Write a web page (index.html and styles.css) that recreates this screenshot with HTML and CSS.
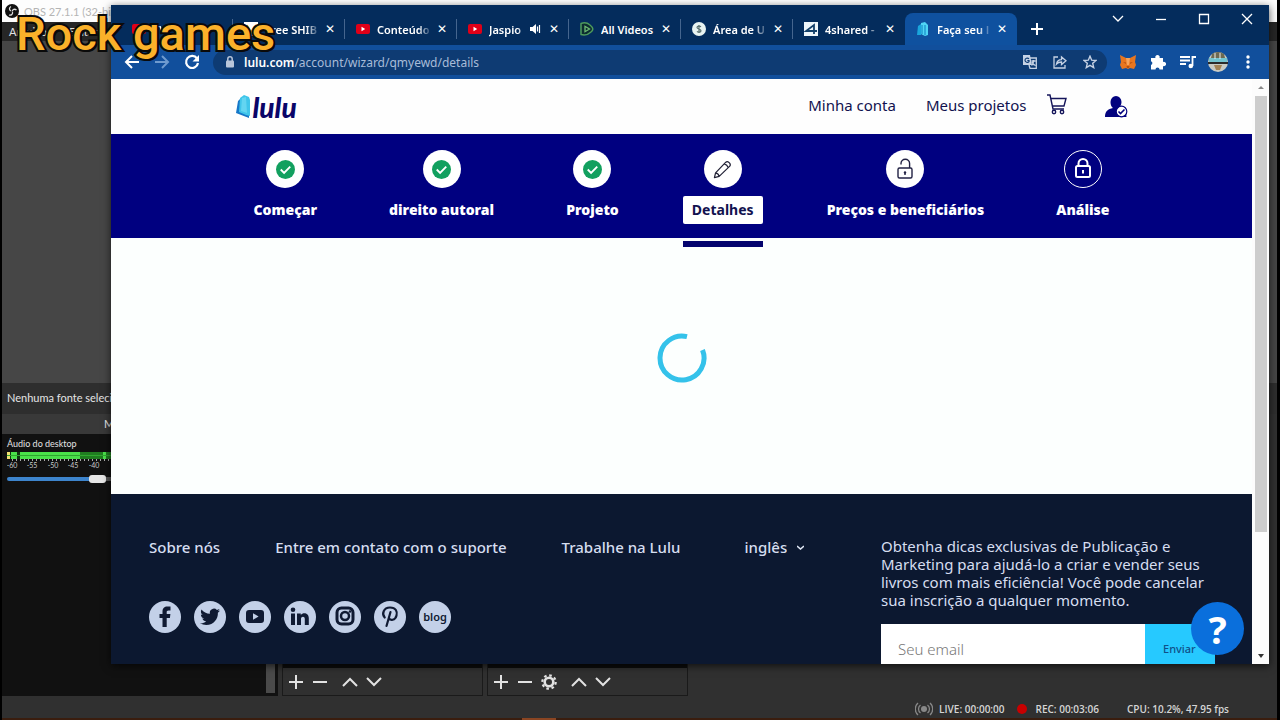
FILE: index.html
```html
<!DOCTYPE html>
<html lang="pt-BR">
<head>
<meta charset="utf-8">
<title>Rock games</title>
<link rel="stylesheet" href="styles.css">
</head>
<body>
<div class="desktop">
  <section class="obs" aria-label="OBS">
    <header class="obs-title">
      <svg width="14" height="14" viewBox="0 0 14 14"><circle cx="7" cy="7" r="7" fill="#111"/><g fill="none" stroke="#ddd" stroke-width="1.3"><path d="M6 2.5c-2 1-2 3.600 0 4.500"/><path d="M11.500 6c-2-1.500-4-.6-4.300 1.500"/><path d="M4 11c2 .6 4-.6 3.500-3"/></g></svg>
      <span>OBS 27.1.1 (32-bit</span>
    </header>
    <nav class="obs-menu"><span>Arquivo</span><span>Editar</span></nav>
    <div class="obs-preview"></div>
    <div class="obs-source">Nenhuma fonte selecionada</div>
    <div class="docks">
      <section class="mixer">
        <h2 class="mixer-title">Mixer de áudio</h2>
        <div class="mixer-body">
          <label class="mixer-label" for="vol">Áudio do desktop</label>
          <svg class="meter" width="260" height="20" viewBox="0 0 260 20">
            <path fill="#207d20" d="M0 1h260v7H0z"/><path fill="#4ae04a" d="M4 1h69v7H4zM96 1h3v7h-3z"/>
            <path fill="#f0e070" d="M0 1h3v7H0z"/><path fill="#10350f" d="M10 1h3v7h-3zM3 1h1v7H3z"/>
            <path stroke="#2fa82f" d="M0 4.500h260"/>
            <path stroke="#aaa" stroke-dasharray="1 3" d="M5 9h255" stroke-width="2"/>
            <g class="scale"><text x="5" y="17">-60</text><text x="25" y="17">-55</text><text x="46" y="17">-50</text><text x="66" y="17">-45</text><text x="87" y="17">-40</text></g>
          </svg>
          <input class="volume" id="vol" type="range" min="0" max="100" value="34">
        </div>
      </section>
      <div class="dock dock-a">
        <div class="dock-tools">
          <button aria-label="Adicionar cena"><svg width="16" height="16"><path d="M8 1v14M1 8h14"/></svg></button>
          <button aria-label="Remover cena"><svg width="16" height="16"><path d="M1 8h14"/></svg></button>
          <button class="spaced" aria-label="Mover cena para cima"><svg width="16" height="16"><path d="M1 12l7-7 7 7"/></svg></button>
          <button aria-label="Mover cena para baixo"><svg width="16" height="16"><path d="M1 4l7 7 7-7"/></svg></button>
        </div>
      </div>
      <div class="dock dock-b">
        <div class="dock-tools">
          <button aria-label="Adicionar fonte"><svg width="16" height="16"><path d="M8 1v14M1 8h14"/></svg></button>
          <button aria-label="Remover fonte"><svg width="16" height="16"><path d="M1 8h14"/></svg></button>
          <button aria-label="Propriedades"><svg width="16" height="16"><circle cx="8" cy="8" r="4.300" stroke-width="2.600"/><circle cx="8" cy="8" r="6.700" stroke-width="2.200" stroke-dasharray="2.600 2.660"/></svg></button>
          <button class="spaced" aria-label="Mover fonte para cima"><svg width="16" height="16"><path d="M1 12l7-7 7 7"/></svg></button>
          <button aria-label="Mover fonte para baixo"><svg width="16" height="16"><path d="M1 4l7 7 7-7"/></svg></button>
        </div>
      </div>
    </div>
    <footer class="obs-status">
      <span class="stat"><svg width="18" height="14" viewBox="0 0 18 14"><circle cx="9" cy="7" r="3" fill="#888"/><path fill="none" stroke="#888" stroke-width="1.300" d="M5.500 3a5 5 0 0 0 0 8M12.500 3a5 5 0 0 1 0 8M3 1a8 8 0 0 0 0 12M15 1a8 8 0 0 1 0 12"/></svg>LIVE: 00:00:00</span>
      <span class="stat rec"><i class="rec-dot"></i>REC: 00:03:06</span>
      <span class="stat cpu">CPU: 10.2%, 47.95 fps</span>
    </footer>
    <div class="taskbar"><i class="task"></i></div>
  </section>

  <section class="browser" aria-label="Navegador">
    <header class="tabstrip">
      <div class="tabs">
        <div class="tab"><svg class="fav" viewBox="0 0 14 14"><rect y="2" width="14" height="10" rx="2" fill="#e00018"/><path fill="#fff" d="M5.500 4.800v4.400L9.200 7z"/></svg><span class="tab-name">TV</span></div>
        <div class="tab"><svg class="fav" viewBox="0 0 14 14"><path fill="#fff" d="M0 0h14v14H0z"/><path fill="none" stroke="#e8a020" stroke-width="1.500" d="M3 3l4 7 5-7"/></svg><span class="tab-name">Free SHIB</span><button class="x" aria-label="Fechar">✕</button></div>
        <div class="tab"><svg class="fav" viewBox="0 0 14 14"><rect y="2" width="14" height="10" rx="2" fill="#e00018"/><path fill="#fff" d="M5.500 4.800v4.400L9.200 7z"/></svg><span class="tab-name">Conteúdo</span><button class="x" aria-label="Fechar">✕</button></div>
        <div class="tab"><svg class="fav" viewBox="0 0 14 14"><rect y="2" width="14" height="10" rx="2" fill="#e00018"/><path fill="#fff" d="M5.500 4.800v4.400L9.200 7z"/></svg><span class="tab-name">Jaspio</span><svg class="sound" width="11" height="10" viewBox="0 0 11 10"><path fill="#fff" d="M0 3h2.500L6 0v10L2.500 7H0z"/><path fill="none" stroke="#fff" stroke-width="1.200" d="M7.500 2.500v5M9.500 1v8"/></svg><button class="x" aria-label="Fechar">✕</button></div>
        <div class="tab"><svg class="fav" viewBox="0 0 14 14"><path fill="#0c2c30" stroke="#4d9a5c" stroke-width="1.500" stroke-linejoin="round" d="M1 1.500Q6-.5 10 3q5 4 1 7-4 4-10 2.500z"/><path fill="none" stroke="#6fbd74" stroke-width="1.300" d="M5 4.300v5.400L9.500 7z"/></svg><span class="tab-name whole">All Videos</span><button class="x" aria-label="Fechar">✕</button></div>
        <div class="tab"><svg class="fav" viewBox="0 0 14 14"><circle cx="7" cy="7" r="7" fill="#e8f3f2"/><path fill="none" stroke="#5a7170" stroke-width="1.200" d="M9 4.800C7.500 3.500 5 4 5 5.500S9 7 9 8.700 6 10.500 5 9.300M7 3v8"/></svg><span class="tab-name">Área de U</span><button class="x" aria-label="Fechar">✕</button></div>
        <div class="tab last"><svg class="fav" viewBox="0 0 14 14"><path fill="#eef6fb" d="M0 0h14v14H0z"/><path fill="none" stroke="#14416b" stroke-width="1.800" d="M10 12V3L2 9h11"/></svg><span class="tab-name">4shared -</span><button class="x" aria-label="Fechar">✕</button></div>
        <div class="tab active"><svg class="fav" viewBox="0 0 14 14"><path fill="#1aa6dc" d="M2 4l3-2v11l-4 0z"/><path fill="#4fd4f5" d="M5 1l4-1 3 3v10l-3 1-4-2z"/><path stroke="#0b7fc0" d="M6 3v9M9 3v10"/></svg><span class="tab-name">Faça seu l</span><button class="x" aria-label="Fechar">✕</button></div>
        <button class="newtab" aria-label="Nova guia"><svg width="12" height="12"><path stroke="#fff" stroke-width="2" d="M6 0v12M0 6h12"/></svg></button>
      </div>
      <div class="win-controls">
        <button aria-label="Pesquisar guias"><svg width="12" height="12"><path d="M1 3l5 5 5-5"/></svg></button>
        <button aria-label="Minimizar"><svg width="12" height="12"><path d="M1 6.500h10"/></svg></button>
        <button aria-label="Maximizar"><svg width="12" height="12"><path d="M1.500 1.500h9v9h-9z"/></svg></button>
        <button aria-label="Fechar janela"><svg width="12" height="12"><path d="M1 1l10 10M11 1L1 11"/></svg></button>
      </div>
    </header>
    <div class="toolbar">
      <button class="tool" aria-label="Voltar"><svg width="16" height="16" viewBox="0 0 16 16"><path fill="none" stroke="#fff" stroke-width="2" d="M15 8H2M8 2L2 8l6 6"/></svg></button>
      <button class="tool" aria-label="Avançar"><svg width="16" height="16" viewBox="0 0 16 16"><path fill="none" stroke="#6f9bcf" stroke-width="2" d="M1 8h13M8 2l6 6-6 6"/></svg></button>
      <button class="tool" aria-label="Recarregar"><svg width="16" height="16" viewBox="0 0 16 16"><path fill="none" stroke="#fff" stroke-width="2.200" d="M13 4.500A6 6 0 1 0 14 9"/><path fill="#fff" d="M15 1v6.500H8.500z"/></svg></button>
      <div class="omnibox">
        <svg width="10" height="12" viewBox="0 0 10 12"><rect x="1" y="4.500" width="8" height="7" rx="1" fill="#b9c6da"/><path fill="none" stroke="#b9c6da" stroke-width="1.500" d="M2.800 5V3a2.200 2.200 0 0 1 4.400 0v2"/></svg>
        <p class="url"><b>lulu.com</b>/account/wizard/qmyewd/details</p>
        <button class="tool dim" aria-label="Traduzir"><svg width="14" height="14" viewBox="0 0 14 14"><path fill="#c6d2e4" d="M0 0h7l2 10H0z"/><path fill="none" stroke="#c6d2e4" stroke-width="1.300" d="M7 3h6.300v10.300H7L6 10M8.500 6h4M10.500 5v1.500c0 2-1 3-2 4M9 7c.5 2 2 3 3.500 3.500"/><path fill="none" stroke="#0f3c74" stroke-width="1.200" d="M6 3.800C4.500 2.500 2 3.200 2 5.200s3 2.900 4 1.500V5.500H4.300"/></svg></button>
        <button class="tool dim" aria-label="Compartilhar"><svg width="14" height="14" viewBox="0 0 14 14"><path fill="none" stroke="#c6d2e4" stroke-width="1.300" d="M5 2H1v11h11v-3M3.500 9c.5-3 2-4.300 5-4.300V2L13 5.800 8.500 9.500V7C6 7 4.700 7.500 3.500 9z"/></svg></button>
        <button class="tool dim" aria-label="Favoritar"><svg width="14" height="14" viewBox="0 0 14 14"><path fill="none" stroke="#c6d2e4" stroke-width="1.400" d="M7 1.200l1.700 4 4.300.3-3.300 2.800 1 4.300L7 10.300l-3.700 2.300 1-4.300L1 5.500l4.300-.3z"/></svg></button>
      </div>
      <button class="tool ext" aria-label="MetaMask"><svg width="16" height="16" viewBox="0 0 16 16"><path fill="#e8761f" d="M0 1l6 3h4l6-3-1 7 1 3-2 4-4-1-2 1-2-1-4 1-2-4 1-3z"/><path fill="#b3500f" d="M3 8l3 .5L6 10zM13 8l-3 .5.200 1.500zM6.500 12h3l-.5 2H7z"/><path fill="#f6a45c" d="M6 4h4L9 11H7z"/></svg></button>
      <button class="tool" aria-label="Extensões"><svg width="16" height="16" viewBox="0 0 16 16"><path fill="#fff" d="M1 4h4.500a2.200 2.200 0 1 1 4 0H13v4a2.200 2.200 0 1 1 0 4v3.500H9.500a2 2 0 0 0-4 0H1V11a2 2 0 0 0 0-3.800z"/></svg></button>
      <button class="tool" aria-label="Mídia"><svg width="16" height="16" viewBox="0 0 16 16"><path fill="none" stroke="#fff" stroke-width="1.800" d="M0 3h10M0 6.500h10M0 10h6M12.500 12V3H16"/><circle cx="10.800" cy="12" r="2.300" fill="#fff"/></svg></button>
      <button class="tool" aria-label="Perfil"><svg width="20" height="20" viewBox="0 0 20 20"><circle cx="10" cy="10" r="10" fill="#c9cbc4"/><path fill="#6d6a52" d="M4 2Q10-2 16 2l1 4H3z"/><path fill="#73c4cf" d="M1 6h18v4H1z"/><path fill="#2c2a2a" d="M0 10h20v2H0z"/><path fill="#a38355" d="M6 13h8l-2 5H8z"/><path stroke="#eee" d="M7 1v6M12 1v6"/></svg></button>
      <button class="tool" aria-label="Menu"><svg width="16" height="16"><g fill="#fff"><circle cx="8" cy="3" r="1.700"/><circle cx="8" cy="8" r="1.700"/><circle cx="8" cy="13" r="1.700"/></g></svg></button>
    </div>

    <div class="viewport">
      <div class="page">
        <header class="site-head">
          <div class="site-inner">
            <a class="logo" href="#"><svg width="15" height="23" viewBox="0 0 15 23"><path fill="#1677c8" d="M2 6l3-3v14l8 3v3L0 18z"/><path fill="#3fc5ea" d="M4 3l4-3 5 2 1 3v16l-4-1-7-3z"/><path fill="#7be0f5" d="M6 3l4-1 1 16-6-2z" opacity=".6"/></svg><span>lulu</span></a>
            <nav class="site-nav">
              <a href="#">Minha conta</a>
              <a href="#">Meus projetos</a>
              <a href="#" class="cart" aria-label="Carrinho"><svg width="20" height="21" viewBox="0 0 20 21"><path fill="none" stroke="#15155a" stroke-width="1.400" d="M0 1h3l3 14h11M4 4.500h15l-2 7.500H5.500"/><circle cx="7" cy="18" r="1.700" fill="none" stroke="#15155a" stroke-width="1.400"/><circle cx="15" cy="18" r="1.700" fill="none" stroke="#15155a" stroke-width="1.400"/></svg></a>
              <a href="#" class="user" aria-label="Usuário"><svg width="23" height="22" viewBox="0 0 23 22"><path fill="#02027e" d="M5.500 6a5.500 6 0 0 1 11 0c0 3-1.500 5-3 6 5 1 8 3 8 9H0c0-6 3-8 8-9-1.500-1-2.500-3-2.500-6z"/><circle cx="16.500" cy="15.500" r="5.300" fill="#fff" stroke="#02027e" stroke-width="1.200"/><path fill="none" stroke="#02027e" stroke-width="1.600" d="M13.500 15.500l2 2 4-4"/></svg></a>
            </nav>
          </div>
        </header>
        <nav class="steps">
          <ol class="steps-list">
            <li class="step"><span class="dot"><svg width="19" height="19" viewBox="0 0 20 20"><circle cx="10" cy="10" r="10" fill="#12a05f"/><path fill="none" stroke="#fff" stroke-width="2" d="M5 10l3.500 3.500L15 7"/></svg></span><a class="step-name" href="#">Começar</a></li>
            <li class="step"><span class="dot"><svg width="19" height="19" viewBox="0 0 20 20"><circle cx="10" cy="10" r="10" fill="#12a05f"/><path fill="none" stroke="#fff" stroke-width="2" d="M5 10l3.500 3.500L15 7"/></svg></span><a class="step-name" href="#">direito autoral</a></li>
            <li class="step"><span class="dot"><svg width="19" height="19" viewBox="0 0 20 20"><circle cx="10" cy="10" r="10" fill="#12a05f"/><path fill="none" stroke="#fff" stroke-width="2" d="M5 10l3.500 3.500L15 7"/></svg></span><a class="step-name" href="#">Projeto</a></li>
            <li class="step current"><span class="dot"><svg width="19" height="19" viewBox="0 0 20 20"><path fill="none" stroke="#222236" stroke-width="1.300" stroke-linejoin="round" d="M1.500 18.500l1.200-5L13.500 2.300q1.500-1.300 3.500.5t.7 3.700L6.500 17.200zM2.700 13.500q3 .6 3.800 3.700M12 4q3 .8 4 4"/></svg></span><a class="step-name" href="#" aria-current="step">Detalhes</a></li>
            <li class="step"><span class="dot"><svg width="20" height="22" viewBox="0 0 20 22"><g fill="none" stroke="#222244" stroke-width="1.400"><rect x="3" y="10" width="14" height="10" rx="1.500"/><path d="M6 6.500V5.500a4.300 4.300 0 0 1 8.600 0V10M10 14v3"/></g><circle cx="10" cy="14.500" r="1.200" fill="#222244"/></svg></span><a class="step-name" href="#">Preços e beneficiários</a></li>
            <li class="step"><span class="dot locked"><svg width="20" height="22" viewBox="0 0 20 22"><g fill="none" stroke="#fff" stroke-width="2"><rect x="3" y="8" width="14" height="11" rx="1.500"/><path d="M5.500 8V5.500a4.500 4.500 0 0 1 9 0V8M10 12v3.500"/></g></svg></span><a class="step-name" href="#">Análise</a></li>
          </ol>
        </nav>
        <main class="content">
          <svg class="loader" width="50" height="50" viewBox="0 0 50 50" role="img" aria-label="Carregando"><path fill="none" stroke="#34c2ea" stroke-width="5" d="M30 3.600A22 22 0 1 0 45.500 17"/></svg>
        </main>
        <footer class="foot">
          <div class="foot-main">
            <div class="foot-links">
              <a href="#">Sobre nós</a>
              <a href="#">Entre em contato com o suporte</a>
              <a href="#">Trabalhe na Lulu</a>
              <span class="lang"><select aria-label="Idioma"><option>inglês</option></select><svg width="7" height="5"><path fill="none" stroke="#dfe6f4" stroke-width="1.600" d="M0 1l3.500 3L7 1"/></svg></span>
            </div>
            <div class="social">
              <a href="#" aria-label="Facebook"><svg viewBox="0 0 32 32"><path d="M13.500 26V17H10.500v-4h3v-2.500C13.500 7 15.500 5.500 18.300 5.500H21.500v4h-2c-1.500 0-1.800.7-1.800 1.800V13h3.700l-.5 4h-3.200v9z"/></svg></a>
              <a href="#" aria-label="Twitter"><svg viewBox="0 0 32 32"><path d="M26 9.500c-.8.400-1.500.6-2.300.7.900-.5 1.500-1.300 1.800-2.200-.8.500-1.700.8-2.600 1a4.100 4.100 0 0 0-7 3.700c-3.400-.2-6.400-1.800-8.400-4.300-1.200 2-.5 4.300 1.200 5.500-.6 0-1.300-.2-1.800-.5 0 2 1.400 3.700 3.300 4.100-.6.200-1.200.2-1.900.1.500 1.600 2 2.800 3.800 2.800-1.700 1.400-3.900 2-6.100 1.700 1.900 1.200 4 1.900 6.300 1.900 7.600 0 11.900-6.400 11.600-12.300.8-.6 1.500-1.300 2.100-2.200z"/></svg></a>
              <a href="#" aria-label="YouTube"><svg viewBox="0 0 32 32"><path fill-rule="evenodd" d="M10 9h12q3 0 3 3v7q0 3-3 3H10q-3 0-3-3v-7q0-3 3-3zm4 3.300v6.400l5.600-3.200z"/></svg></a>
              <a href="#" aria-label="LinkedIn"><svg viewBox="0 0 32 32"><circle cx="9" cy="8.700" r="2.300"/><path d="M7 12.500h4V24H7zM13 12.500h3.800v1.600c2-3 8-2.500 8 3V24h-4v-6c0-3.300-3.800-3-3.800 0v6h-4z"/></svg></a>
              <a href="#" aria-label="Instagram"><svg viewBox="0 0 32 32"><rect x="8" y="7" width="16" height="16" rx="4.500" fill="none" stroke="#101a33" stroke-width="3"/><circle cx="16" cy="15" r="4" fill="none" stroke="#101a33" stroke-width="2.500"/><circle cx="21" cy="10.500" r="1.300"/></svg></a>
              <a href="#" aria-label="Pinterest"><svg viewBox="0 0 32 32"><path fill="none" stroke="#101a33" stroke-width="2.200" stroke-linecap="round" d="M10.700 16.500C7.500 13 9.500 6.500 16 6.500c6 0 7.500 4 6.500 8-1.200 5-6.500 5.500-7.500 2.500M16.500 11l-4 14"/></svg></a>
              <a href="#" class="blog">blog</a>
            </div>
          </div>
          <form class="news">
            <label for="email">Obtenha dicas exclusivas de Publicação e Marketing para ajudá-lo a criar e vender seus livros com mais eficiência! Você pode cancelar sua inscrição a qualquer momento.</label>
            <div class="news-row"><input id="email" type="email" placeholder="Seu email"><button type="button">Enviar</button></div>
          </form>
        </footer>
      </div>
      <div class="scroll" aria-hidden="true"><i class="arrow up"></i><i class="thumb"></i><i class="arrow down"></i></div>
      <button class="help" aria-label="Ajuda">?</button>
    </div>
  </section>
  <div class="watermark">Rock games</div>
</div>
</body>
</html>
```
FILE: styles.css
```css
* { box-sizing: border-box; }
body { margin: 0; background: #000; font-family: "Noto Sans", sans-serif; }
button { border: 0; background: none; padding: 0; color: inherit; font: inherit; cursor: pointer; }
a { color: inherit; text-decoration: none; }
svg { display: block; flex: none; }
h2, p, ol { margin: 0; padding: 0; font-size: inherit; font-weight: 400; }

.desktop { position: relative; min-height: 100vh; padding: 0 3px 0 2px; display: flex; overflow: hidden; }

/* OBS window */
.obs { flex: 1; display: flex; flex-direction: column; background: #303030; color: #e4e4e4; font-family: "Lato", sans-serif; font-size: 11px; }
.obs-title { height: 22px; padding: 0 3px; display: flex; align-items: center; gap: 5px; background: #fdfdfd; color: #b4b4b4; }
.obs-menu { height: 19px; padding: 0 7px; display: flex; align-items: center; gap: 22px; background: #262626; }
.obs-preview { flex: 1; background: #464646; }
.obs-source { height: 31px; padding: 0 5px; line-height: 29px; background: #2e2e2e; }
.docks { height: 282px; display: flex; gap: 4px; }
.mixer { width: 276px; display: flex; flex-direction: column; background: #111; }
.mixer-title { line-height: 20px; text-align: center; background: #393939; }
.mixer-body { flex: 1; padding: 3px 5px 0; background: linear-gradient(#4a4a4a, #4a4a4a) 264px 0 / 9px 259px no-repeat #111; }
.mixer-label { display: block; font-size: 9px; line-height: 14px; }
.scale { font-size: 7px; fill: #ccc; text-anchor: middle; }
.volume { display: block; appearance: none; width: 259px; height: 4px; margin: 6px 0 0; border-radius: 2px; background: linear-gradient(90deg, #3d84cc 35%, #555 35%); }
.volume::-webkit-slider-thumb { appearance: none; width: 17px; height: 8px; border-radius: 3px; background: #e6e6e6; }
.dock { width: 201px; display: flex; flex-direction: column; justify-content: flex-end; background: #0c0c0c; border: 1px solid #1a1a1a; }
.dock-tools { height: 27px; padding: 0 5px; display: flex; align-items: center; gap: 8px; background: #303030; }
.dock-tools svg { fill: none; stroke: #e2e2e2; stroke-width: 2; }
.dock-tools .spaced { margin-left: 6px; }
.obs-status { height: 22px; padding: 4px 48px 0 0; display: flex; align-items: center; justify-content: flex-end; font-family: "Open Sans", sans-serif; font-size: 10px; font-weight: 600; color: #d5d5d5; }
.stat { display: flex; align-items: center; gap: 6px; }
.rec { margin-left: 12px; gap: 9px; }
.rec-dot { width: 10px; height: 10px; border-radius: 50%; background: #c80000; }
.cpu { margin-left: 28px; }
.taskbar { height: 2px; padding-left: 520px; background: #3a1d0e; }
.task { display: block; width: 34px; height: 2px; background: #8a4522; }

/* Browser window */
.browser { position: absolute; inset: 5px 11px 56px 111px; display: flex; flex-direction: column; overflow: hidden; background: #fff; box-shadow: 0 2px 8px #000a; }
.tabstrip { height: 40px; display: flex; justify-content: space-between; background: #042c5c; color: #fff; }
.tabs { padding: 8px 0 0 10px; display: flex; }
.tab { width: 112px; height: 32px; padding: 0 7px 0 11px; display: flex; align-items: center; font-size: 11px; font-weight: 600; border-right: 1px solid transparent; border-image: linear-gradient(transparent 22%, #45658e 22%, #45658e 78%, transparent 78%) 1; }
.tab.last, .tab.active { border-image: none; }
.tab.active { background: #0f519f; border-radius: 8px 8px 0 0; }
.fav { width: 14px; height: 14px; margin-right: 7px; }
.tab-name { flex: 1; min-width: 0; overflow: hidden; white-space: nowrap; mask-image: linear-gradient(90deg, #000 75%, #0003 95%); }
.tab-name.whole { mask-image: none; }
.sound { margin: 0 3px; }
.x { width: 14px; font-size: 12px; line-height: 14px; margin-left: 3px; font-weight: 700; font-family: "DejaVu Sans", sans-serif; }
.newtab { width: 40px; display: grid; place-items: center; }
.win-controls { height: 28px; padding-right: 1px; display: flex; }
.win-controls button { width: 43px; display: grid; place-items: center; }
.win-controls svg { fill: none; stroke: #fff; stroke-width: 1.3; }
.toolbar { height: 34px; padding: 0 6px; display: flex; align-items: center; background: #114f9c; }
.tool { width: 30px; height: 24px; display: grid; place-items: center; }
.omnibox { flex: 1; height: 25px; margin: 0 6px; padding: 0 2px 0 12px; border-radius: 13px; display: flex; align-items: center; background: #0e3b73; }
.url { flex: 1; padding-left: 9px; font-size: 12px; color: #a8bcd8; }
.url b { font-weight: 600; color: #fff; }

.viewport { position: relative; flex: 1; min-height: 0; display: flex; overflow: hidden; }
.page { flex: 1; min-width: 0; color: #12124f; }
.site-head { height: 55px; background: #fefefe; }
.site-inner { max-width: 892px; height: 55px; margin: 0 auto; display: flex; justify-content: space-between; align-items: center; }
.logo { display: flex; align-items: center; gap: 2px; font: italic 900 28px "Lato", sans-serif; color: #0a0568; }
.site-nav { display: flex; align-items: center; font-size: 15px; line-height: 20px; }
.site-nav a { padding-bottom: 4px; }
.site-nav a + a { margin-left: 30px; }
.site-nav .cart { margin-left: 20px; }
.site-nav .user { margin-left: 38px; padding: 0; }
.steps { height: 104px; background: #000080; color: #fff; }
.steps-list { max-width: 856px; margin: 0 auto; padding-top: 16px; display: flex; justify-content: space-between; list-style: none; }
.step { display: flex; flex-direction: column; align-items: center; }
.dot { width: 38px; height: 38px; margin-bottom: 8px; border-radius: 50%; display: grid; place-items: center; background: #fff; }
.dot.locked { background: none; border: 1px solid #fff; }
.step-name { line-height: 28px; font-size: 14px; font-weight: 900; white-space: nowrap; }
.current { margin: 0 -8px; }
.current .step-name { position: relative; padding: 0 9px; border-radius: 2px; background: #fff; color: #12124f; font-weight: 700; }
.current .step-name::after { content: ""; position: absolute; left: 0; right: 0; top: 45px; height: 6px; background: #04046e; }
.content { height: 256px; padding-top: 95px; background: #fcfffe; }
.loader { margin: 0 auto; }
.foot { padding: 43px 37px 0 38px; display: flex; justify-content: space-between; background: #0c1830; color: #d6def0; font-size: 15px; font-weight: 500; }
.foot-links { display: flex; align-items: center; gap: 55px; height: 20px; line-height: 20px; white-space: nowrap; }
.lang { margin-left: 9px; display: flex; align-items: center; gap: 10px; }
.lang select { appearance: none; height: 24px; border: 0; padding: 0; background: none; color: inherit; font: inherit; line-height: 24px; }
.social { display: flex; gap: 13px; margin-top: 44px; }
.social a { width: 32px; height: 32px; border-radius: 50%; background: #c3d0e8; color: #101a33; display: grid; place-items: center; }
.social svg { width: 32px; height: 32px; fill: #101a33; }
.social .blog { font-size: 11px; font-weight: 600; line-height: 28px; }
.news { width: 334px; }
.news label { display: block; line-height: 18px; font-weight: 400; }
.news-row { height: 49px; margin-top: 15px; display: flex; }
.news-row input { flex: 1; min-width: 0; border: 0; padding: 0 17px; background: #fff; font: 300 15px "Noto Sans", sans-serif; }
.news-row input::placeholder { color: #777; }
.news-row button { width: 70px; padding-left: 18px; text-align: left; background: #26c9ff; color: #0f5088; font-size: 11px; }
.scroll { width: 17px; display: flex; flex-direction: column; align-items: center; background: #fcfcfc; }
.arrow { width: 17px; height: 17px; display: grid; place-items: center; }
.arrow::before { content: ""; border: 3px solid transparent; border-bottom-color: #888; border-top: 0; }
.arrow.down::before { border-top: 4px solid #333; border-bottom: 0; }
.thumb { width: 12px; height: 436px; margin-bottom: auto; background: #cdcdcd; }
.help { position: absolute; right: 25px; bottom: 9px; width: 53px; height: 53px; border-radius: 50%; background: #0a6fdc; color: #fff; font: 700 38px "Noto Sans", sans-serif; }

.watermark { position: absolute; left: 16px; top: 7px; font: 500 47px/54px "Roboto", sans-serif; color: #fbb12a; -webkit-text-stroke: 4px #0a0a0a; paint-order: stroke fill; text-shadow: 2px 2px 0 #0a0a0a; white-space: nowrap; }
```
